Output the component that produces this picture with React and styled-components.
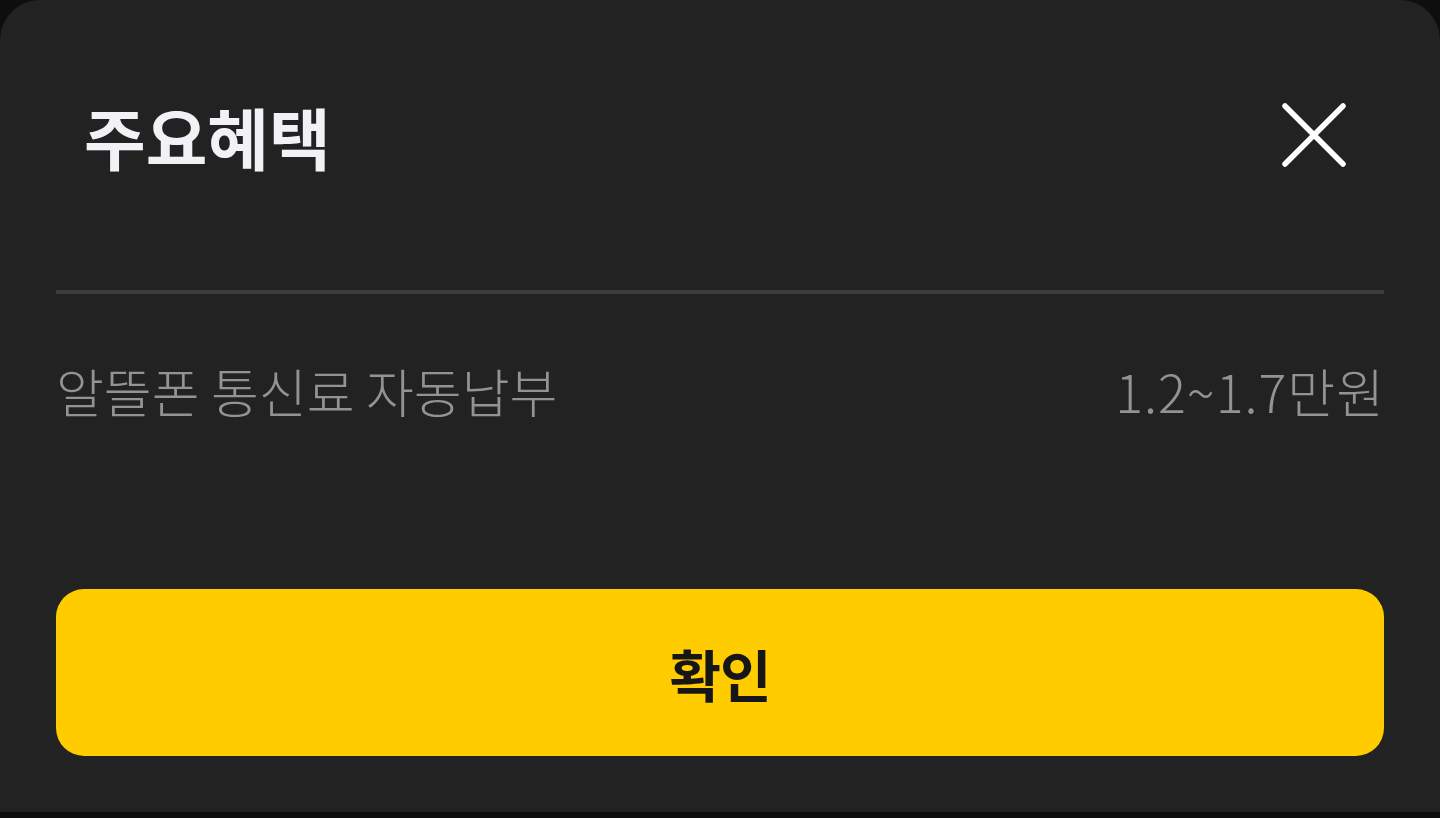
import React from "react";
import styled, { createGlobalStyle } from "styled-components";

const Global = createGlobalStyle`
  html, body {
    margin: 0;
    padding: 0;
    background: #0e0e0e;
  }
  body {
    font-family: "Noto Sans CJK KR", "Noto Sans", sans-serif;
  }
`;

const Sheet = styled.div`
  height: 812px;
  box-sizing: border-box;
  background: #222222;
  border-radius: 40px 40px 0 0;
  padding: 0 56px 56px;
  display: flex;
  flex-direction: column;
`;

const Header = styled.header`
  height: 270px;
  display: flex;
  align-items: center;
  justify-content: space-between;
  padding: 0 38px 0 28px;
`;

const Title = styled.h1`
  margin: 0;
  font-size: 67px;
  font-weight: 700;
  color: #f2f2f6;
`;

const CloseButton = styled.button`
  width: 64px;
  height: 64px;
  padding: 0;
  border: none;
  background: none;
  display: flex;
`;

const Divider = styled.hr`
  margin: 20px 0 0;
  border: none;
  height: 4px;
  background: #3c3c3c;
`;

const Row = styled.div`
  display: flex;
  justify-content: space-between;
  align-items: center;
  height: 192px;
  font-size: 52px;
  font-weight: 300;
  color: #939393;
`;

const Value = styled.span`
  letter-spacing: 1px;
  margin-right: -1px;
`;

const Spacer = styled.div`
  flex: 1;
`;

const Confirm = styled.button`
  height: 167px;
  border: none;
  border-radius: 28px;
  background: #ffcc00;
  color: #161616;
  font-family: inherit;
  font-size: 56px;
  font-weight: 700;
  letter-spacing: -1px;
`;

export default function App() {
  return (
    <>
      <Global />
      <Sheet>
        <Header>
          <Title>주요혜택</Title>
          <CloseButton aria-label="닫기">
            <svg width="64" height="64" viewBox="0 0 64 64">
              <path d="M3 3L61 61M61 3L3 61" stroke="#ffffff" strokeWidth="5.5" strokeLinecap="round" />
            </svg>
          </CloseButton>
        </Header>
        <Divider />
        <Row>
          <span>알뜰폰 통신료 자동납부</span>
          <Value>1.2~1.7만원</Value>
        </Row>
        <Spacer />
        <Confirm>확인</Confirm>
      </Sheet>
    </>
  );
}
